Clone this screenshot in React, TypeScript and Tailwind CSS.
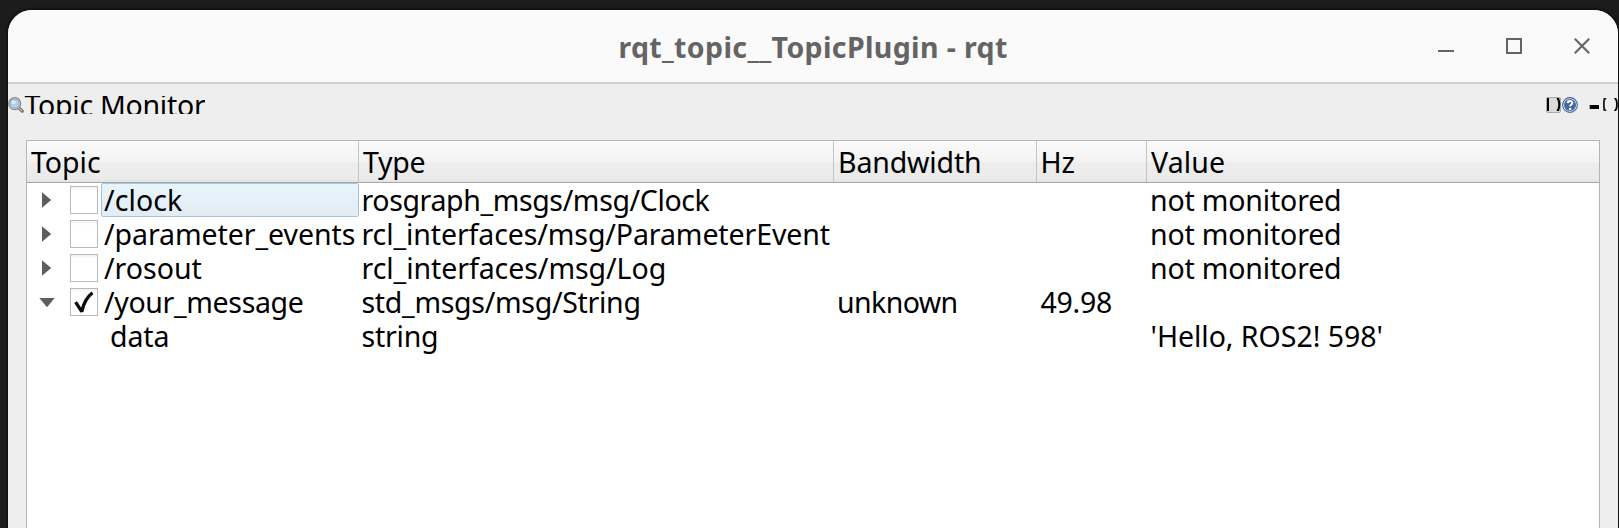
import type { ReactNode } from "react";

const COLUMNS = "grid grid-cols-[332px_475px_203px_110px_1fr]";

interface TopicRow {
  name: string;
  nameClass: string;
  type: string;
  typeClass: string;
  bandwidth?: string;
  hz?: string;
  value?: string;
  valueClass?: string;
  expanded?: boolean;
  checked?: boolean;
  selected?: boolean;
  child?: boolean;
}

const rows: TopicRow[] = [
  { name: "/clock", nameClass: "tracking-[0.09px]", type: "rosgraph_msgs/msg/Clock", typeClass: "tracking-[-0.38px]", value: "not monitored", valueClass: "tracking-[-0.18px]", selected: true },
  { name: "/parameter_events", nameClass: "tracking-[-0.07px]", type: "rcl_interfaces/msg/ParameterEvent", typeClass: "tracking-[-0.1px]", value: "not monitored", valueClass: "tracking-[-0.18px]" },
  { name: "/rosout", nameClass: "tracking-normal", type: "rcl_interfaces/msg/Log", typeClass: "tracking-[-0.06px]", value: "not monitored", valueClass: "tracking-[-0.18px]" },
  { name: "/your_message", nameClass: "tracking-[-0.35px]", type: "std_msgs/msg/String", typeClass: "tracking-[-0.3px]", bandwidth: "unknown", hz: "49.98", expanded: true, checked: true },
  { name: "data", nameClass: "tracking-[-0.1px]", type: "string", typeClass: "tracking-[-0.23px]", value: "'Hello, ROS2! 598'", valueClass: "tracking-[-0.03px]", child: true },
];

function MagnifierIcon() {
  return (
    <svg className="block h-4 w-4 shrink-0" viewBox="0 0 16 16">
      <path d="M10.6 10.6L14.2 14.2" stroke="#6b6b66" strokeWidth="3.2" strokeLinecap="round" />
      <path d="M11.6 11.5L14 13.9" stroke="#c9c9c4" strokeWidth="1.1" strokeLinecap="round" />
      <circle cx="6.7" cy="6.7" r="6" fill="#e8ecef" stroke="#858783" strokeWidth="1.2" />
      <circle cx="6.7" cy="6.7" r="4.5" fill="#b4cdec" stroke="#7d9bc2" strokeWidth="0.9" />
      <ellipse cx="5.5" cy="5.2" rx="2.3" ry="1.9" fill="#dce9f7" />
    </svg>
  );
}

function HelpIcon() {
  return (
    <svg className="block h-4 w-4 shrink-0" viewBox="0 0 16 16">
      <circle cx="8" cy="8" r="7.4" fill="#eef3fa" stroke="#3e6396" strokeWidth="1.1" />
      <circle cx="8" cy="8" r="6" fill="#41699f" />
      <path d="M5.7 6.1C5.8 3.3 10.4 3.4 10.3 6C10.2 7.6 8.1 7.6 8.1 9.6" fill="none" stroke="#fff" strokeWidth="1.9" />
      <path d="M7 10.9H9.2V12.9H7Z" fill="#fff" />
    </svg>
  );
}

function ReloadButton() {
  return (
    <svg className="block h-4 w-[15px] shrink-0" viewBox="0 0 15 16">
      <rect x="0.5" y="0.5" width="14" height="15" rx="1.5" fill="#dadada" stroke="#a9a9a9" />
      <path d="M1 1H3V14H1Z" fill="#000" />
      <path d="M10.5 1H13C14.8 4.5 14.8 10.5 13 14H10.5C12.9 10 12.9 5 10.5 1Z" fill="#000" />
    </svg>
  );
}

function DockControls() {
  return (
    <svg className="ml-[11px] block h-4 w-[29px] shrink-0" viewBox="0 0 29 16">
      <path d="M0.7 8H10V12H0.7Z" fill="#000" />
      <path d="M17.5 1H14.6C14.1 3 14 5 14 7.5S14.1 12 14.6 14H17.5V13.4C15.9 12.5 15.8 10 15.8 7.5S15.9 2.5 17.5 1.6Z" fill="#15212b" />
      <path d="M24.8 1H27C28.6 2.5 28.8 5 28.8 7.5S28.6 12.5 27 14H24.8C26.8 12 27 10 27 7.5S26.8 3 24.8 1Z" fill="#000" />
    </svg>
  );
}

function Expander({ expanded }: { expanded?: boolean }) {
  return (
    <svg className="block h-4 w-4" viewBox="0 0 16 16">
      {expanded ? <path d="M0.3 4H15.7L8 13.2Z" fill="#5e5e5e" /> : <path d="M3 0.2V15.8L12.2 8Z" fill="#5e5e5e" />}
    </svg>
  );
}

function CheckBox({ checked }: { checked?: boolean }) {
  return (
    <div className="h-7 w-7 border border-[#b9b9b9] bg-linear-to-b from-[#f1f1f1] to-white to-15%">
      {checked && (
        <svg className="block h-[26px] w-[26px]" viewBox="0 0 26 26">
          <path d="M4.6 13.2L10.8 22.6C12.2 15.5 15.6 8.4 21.5 3.8" fill="none" stroke="#0b0b0b" strokeWidth="3.3" strokeLinejoin="bevel" />
        </svg>
      )}
    </div>
  );
}

function HeaderCell({ children, className, last }: { children: ReactNode; className: string; last?: boolean }) {
  return (
    <div className={`${last ? "" : "border-r border-[#c4c4c4]"} h-[41px] pt-px leading-[41px] whitespace-nowrap ${className}`}>{children}</div>
  );
}

export default function App() {
  return (
    <div className="h-[528px] w-[1619px] overflow-hidden bg-[#1c1c1c] pt-[10px] pr-px pl-2 font-['Noto_Sans','Open_Sans',sans-serif] text-[28.5px] text-black">
      <div className="flex h-full flex-col overflow-hidden rounded-t-[24px] bg-[#eeeeee] shadow-[0_0_3px_1px_#0c0c0c]">
        <header className="grid h-[74px] shrink-0 grid-cols-[1fr_auto_1fr] border-b-2 border-[#cfcfcf] bg-[#fafafa] text-[#646464]">
          <div />
          <h1 className="pt-px text-[28.5px] leading-[72px] font-bold tracking-[0.37px] whitespace-nowrap">rqt_topic__TopicPlugin - rqt</h1>
          <div className="flex items-start justify-end gap-[52px] pt-7 pr-7">
            <svg className="block h-4 w-4" viewBox="0 0 16 16"><path d="M0 13H16" stroke="currentColor" strokeWidth="2" /></svg>
            <svg className="block h-4 w-4" viewBox="0 0 16 16"><rect x="1" y="1" width="14" height="14" fill="none" stroke="currentColor" strokeWidth="2" /></svg>
            <svg className="block h-4 w-4" viewBox="0 0 16 16"><path d="M0.8 0.8L15.2 15.2M15.2 0.8L0.8 15.2" stroke="currentColor" strokeWidth="2.1" /></svg>
          </div>
        </header>

        <div className="mt-3 flex h-[18px] shrink-0 items-start">
          <div className="pt-px"><MagnifierIcon /></div>
          <div className="h-[18px] overflow-hidden pl-[0.5px] leading-[18px] tracking-[-0.27px] whitespace-nowrap">Topic Monitor</div>
          <div className="ml-auto flex items-start pt-px">
            <ReloadButton />
            <div className="w-px" />
            <HelpIcon />
            <DockControls />
          </div>
        </div>

        <div className="mt-[26px] mr-[18px] ml-[18px] flex-1 border-x border-t border-[#b4b4b4] bg-white">
          <div className={`${COLUMNS} h-[42px] border-b border-[#a9a9a9] bg-[linear-gradient(#fbfbfb,#f2f2f2_50%,#ededed_55%,#ebebeb_92%,#e2e2e2)]`}>
            <HeaderCell className="pl-1">Topic</HeaderCell>
            <HeaderCell className="pl-1 tracking-[-0.28px]">Type</HeaderCell>
            <HeaderCell className="pl-1 tracking-[-0.15px]">Bandwidth</HeaderCell>
            <HeaderCell className="pl-[3.5px] tracking-[-0.12px]">Hz</HeaderCell>
            <HeaderCell className="pl-1 tracking-[0.13px]" last>Value</HeaderCell>
          </div>
          {rows.map((row) => (
            <div key={row.name} className={`${COLUMNS} h-[34px] leading-[34px] whitespace-nowrap`}>
              <div className="flex">
                {row.child ? (
                  <div className="w-20 shrink-0" />
                ) : (
                  <div className="flex w-[74px] shrink-0 items-start">
                    <div className="ml-3 pt-[9px]"><Expander expanded={row.expanded} /></div>
                    <div className="ml-[15px] pt-[3px]"><CheckBox checked={row.checked} /></div>
                  </div>
                )}
                <div className={`h-[34px] flex-1 ${row.selected ? "rounded-[2px] border border-[#a9c4d6] bg-linear-to-b from-[#e8f4fc] to-[#e3ecf4] pl-0.5 leading-[32px]" : "pl-[3px]"} ${row.nameClass}`}>{row.name}</div>
              </div>
              <div className={`pl-[2.5px] ${row.typeClass}`}>{row.type}</div>
              <div className="pl-[3px] tracking-[-0.6px]">{row.bandwidth}</div>
              <div className="pl-[3.5px] tracking-[-0.26px]">{row.hz}</div>
              <div className={`${row.child ? "pl-[3.5px]" : "pl-[3px]"} ${row.valueClass ?? ""}`}>{row.value}</div>
            </div>
          ))}
        </div>
      </div>
    </div>
  );
}
